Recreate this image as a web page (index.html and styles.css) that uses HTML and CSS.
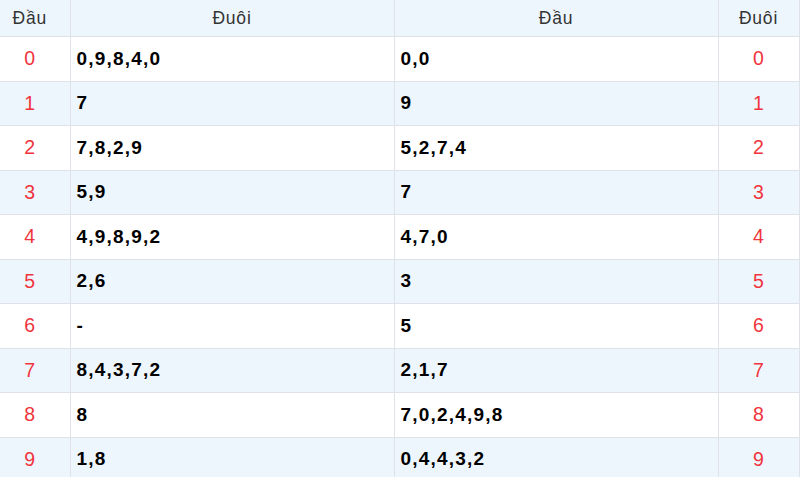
FILE: index.html
```html
<!DOCTYPE html>
<html lang="vi">
<head>
<meta charset="utf-8">
<link rel="stylesheet" href="styles.css">
</head>
<body>
<table class="lt">
  <colgroup>
    <col class="c-a"><col class="c-b"><col class="c-c"><col class="c-d">
  </colgroup>
  <thead>
    <tr><th>Đầu</th><th>Đuôi</th><th>Đầu</th><th>Đuôi</th></tr>
  </thead>
  <tbody>
    <tr><td class="num">0</td><td class="val">0,9,8,4,0</td><td class="val">0,0</td><td class="num">0</td></tr>
    <tr><td class="num">1</td><td class="val">7</td><td class="val">9</td><td class="num">1</td></tr>
    <tr><td class="num">2</td><td class="val">7,8,2,9</td><td class="val">5,2,7,4</td><td class="num">2</td></tr>
    <tr><td class="num">3</td><td class="val">5,9</td><td class="val">7</td><td class="num">3</td></tr>
    <tr><td class="num">4</td><td class="val">4,9,8,9,2</td><td class="val">4,7,0</td><td class="num">4</td></tr>
    <tr><td class="num">5</td><td class="val">2,6</td><td class="val">3</td><td class="num">5</td></tr>
    <tr><td class="num">6</td><td class="val">-</td><td class="val">5</td><td class="num">6</td></tr>
    <tr><td class="num">7</td><td class="val">8,4,3,7,2</td><td class="val">2,1,7</td><td class="num">7</td></tr>
    <tr><td class="num">8</td><td class="val">8</td><td class="val">7,0,2,4,9,8</td><td class="num">8</td></tr>
    <tr><td class="num">9</td><td class="val">1,8</td><td class="val">0,4,4,3,2</td><td class="num">9</td></tr>
  </tbody>
</table>
</body>
</html>
```
FILE: styles.css
```css
html, body {
  margin: 0;
  padding: 0;
  background: #ffffff;
}
body {
  font-family: "Liberation Sans", Arial, sans-serif;
  overflow: hidden;
}
.lt {
  border-collapse: collapse;
  table-layout: fixed;
  width: 809px;
  margin-left: -10px;
}
.c-a { width: 80px; }
.c-b { width: 324px; }
.c-c { width: 324px; }
.c-d { width: 81px; }

.lt th,
.lt td {
  border: 1px solid #dfe3e8;
  padding: 0 6px;
}
.lt th:first-child,
.lt td:first-child {
  border-left: none;
}
.lt thead th {
  border-top: none;
  height: 36px;
  background: #eef6fd;
  color: #333333;
  font-weight: normal;
  font-size: 17.5px;
  letter-spacing: 0.8px;
  text-align: center;
  vertical-align: middle;
}
.lt tbody tr {
  height: 44.5px;
}
.lt tbody tr:nth-child(even) {
  background: #eef6fd;
}
.num {
  color: #f0343e;
  font-size: 19.5px;
  text-align: center;
}
.val {
  color: #000000;
  font-weight: bold;
  font-size: 19px;
  letter-spacing: 1.2px;
  text-align: left;
}
```
